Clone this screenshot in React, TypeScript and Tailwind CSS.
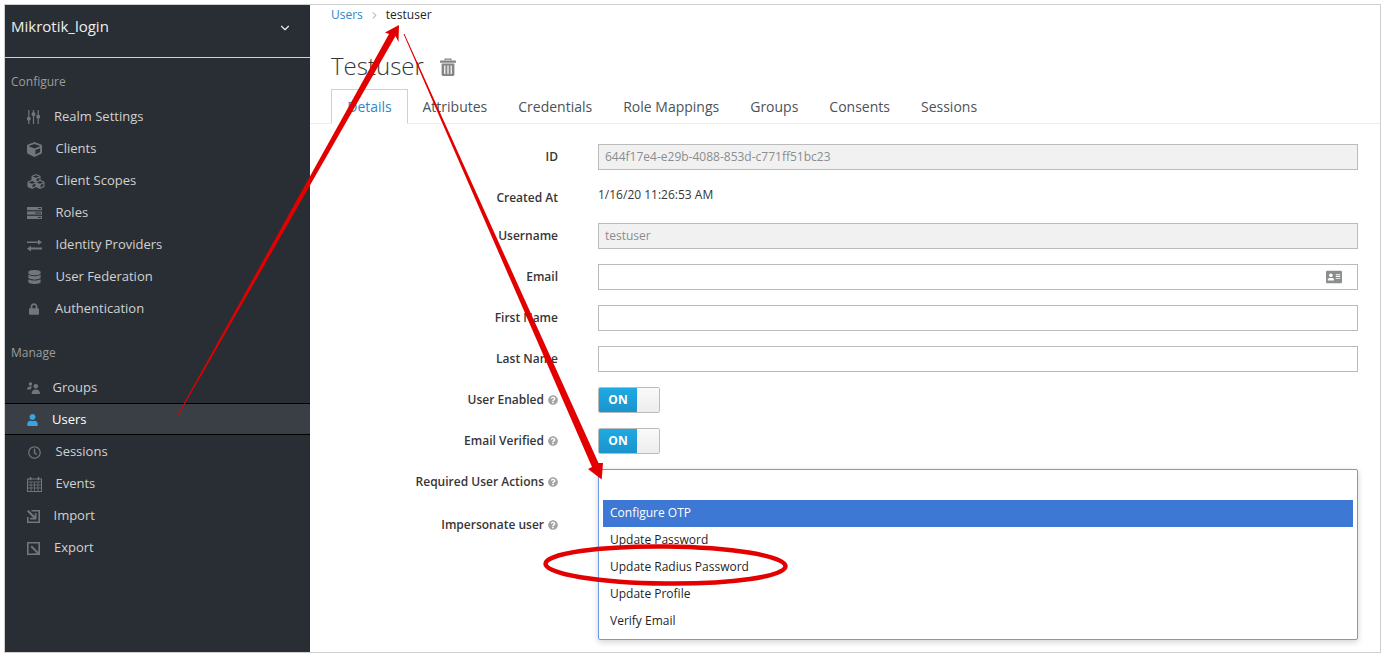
import type { ReactNode } from "react";
import { FaAddressCard, FaCube, FaCubes, FaDatabase, FaLock, FaQuestionCircle, FaRegClock, FaUser } from "react-icons/fa";
import { LuChevronDown, LuChevronRight } from "react-icons/lu";

const SlidersIcon = () => (
  <svg viewBox="0 0 13 14" className="h-[14px] w-[13px]" fill="currentColor">
    <rect x="1.2" y="0" width="1.2" height="14" />
    <rect x="5.9" y="0" width="1.2" height="14" />
    <rect x="10.6" y="0" width="1.2" height="14" />
    <rect x="0" y="7" width="3.6" height="3.4" rx="0.8" />
    <rect x="4.7" y="2.6" width="3.6" height="3.4" rx="0.8" />
    <rect x="9.4" y="5" width="3.6" height="3.4" rx="0.8" />
  </svg>
);

const RolesIcon = () => (
  <svg viewBox="0 0 15 12" className="h-3 w-[15px]" fill="currentColor">
    <rect x="0" y="0" width="15" height="3.2" />
    <rect x="0" y="4.4" width="15" height="3.2" />
    <rect x="0" y="8.8" width="15" height="3.2" />
    <rect x="11" y="1" width="3" height="1" fill="#292e34" />
    <rect x="8" y="5.5" width="6" height="1" fill="#292e34" />
    <rect x="11" y="9.9" width="3" height="1" fill="#292e34" />
  </svg>
);

const ProvidersIcon = () => (
  <svg viewBox="0 0 15 13" className="h-[13px] w-[15px]" fill="currentColor">
    <path d="M0 2.4H11V0.4L15 3.2L11 6V4H0Z" />
    <path d="M15 8.6H4V6.8L0 9.8L4 12.6V10.4H15Z" />
  </svg>
);

const GroupsIcon = () => (
  <svg viewBox="0 0 13 12" className="h-[12px] w-[13px]" fill="currentColor">
    <circle cx="3.4" cy="2" r="1.8" />
    <path d="M0 7.4C0 5.2 1.4 4.4 3.4 4.4C4.2 4.4 4.8 4.5 5.3 4.8C4.4 5.6 3.9 6.4 3.8 7.4Z" />
    <circle cx="8.8" cy="4.2" r="2.3" />
    <path d="M4.6 12C4.6 8.8 6.2 7.4 8.8 7.4C11.4 7.4 13 8.8 13 12Z" />
  </svg>
);

const CalendarIcon = () => (
  <svg viewBox="0 0 15 15" className="h-[15px] w-[15px]" fill="none" stroke="currentColor">
    <rect x="0.5" y="2" width="14" height="12.5" strokeWidth="1" />
    <path d="M0.5 5H14.5M0.5 8H14.5M0.5 11H14.5M4 5V14.5M7.5 5V14.5M11 5V14.5" strokeWidth="0.8" />
    <path d="M3.5 0V3.2M11.5 0V3.2" strokeWidth="1.6" />
  </svg>
);

const ImportIcon = () => (
  <svg viewBox="0 0 13 13" className="h-[13px] w-[13px]" fill="none" stroke="currentColor" strokeWidth="1.6">
    <path d="M4.5 0.8H12.2V12.2H0.8V7" />
    <path d="M0.8 0.8L7.8 7.8" strokeWidth="2" />
    <path d="M3.2 8.6H8.6V3.2" strokeWidth="1.8" />
  </svg>
);

const ExportIcon = () => (
  <svg viewBox="0 0 13 13" className="h-[13px] w-[13px]" fill="none" stroke="currentColor" strokeWidth="1.6">
    <path d="M12.2 7V0.8H0.8V12.2H7" />
    <path d="M4.2 4.2L11.6 11.6" strokeWidth="2" />
    <path d="M6.4 12.2H12.2V6.4" strokeWidth="1.8" />
  </svg>
);

const TrashIcon = () => (
  <svg viewBox="0 0 16 18" className="ml-[16px] mt-[2px] h-[18px] w-[16px] text-[#858585]" fill="currentColor">
    <path d="M4.5 2.6V0.6H11.5V2.6H10.2V1.8H5.8V2.6Z" />
    <rect x="0" y="2.6" width="16" height="2.2" rx="0.4" />
    <path
      fillRule="evenodd"
      d="M1.6 5.6H14.4V16.6C14.4 17.4 13.8 18 13 18H3C2.2 18 1.6 17.4 1.6 16.6ZM4.2 7.4V16H5.4V7.4ZM7.4 7.4V16H8.6V7.4ZM10.6 7.4V16H11.8V7.4Z"
    />
  </svg>
);

type NavItem = { label: string; icon: ReactNode; textClass: string; active?: boolean };

const configureItems: NavItem[] = [
  { label: "Realm Settings", icon: <SlidersIcon />, textClass: "ml-[27px]" },
  { label: "Clients", icon: <FaCube className="h-[15px] w-[15px]" />, textClass: "ml-[28.5px]" },
  { label: "Client Scopes", icon: <FaCubes className="h-[17px] w-[18px]" />, textClass: "ml-[28.5px]" },
  { label: "Roles", icon: <RolesIcon />, textClass: "ml-[28.5px]" },
  { label: "Identity Providers", icon: <ProvidersIcon />, textClass: "ml-[28.5px]" },
  { label: "User Federation", icon: <FaDatabase className="ml-px h-[14px] w-[13px]" />, textClass: "ml-[28.5px]" },
  { label: "Authentication", icon: <FaLock className="ml-[2px] h-[12px] w-[10px]" />, textClass: "ml-[28px]" },
];

const manageItems: NavItem[] = [
  { label: "Groups", icon: <GroupsIcon />, textClass: "ml-[25.5px]" },
  { label: "Users", icon: <FaUser className="h-[12px] w-[11px] text-[#39a5dc]" />, textClass: "ml-[25px]", active: true },
  { label: "Sessions", icon: <FaRegClock className="ml-px h-[13px] w-[13px]" />, textClass: "ml-[28.5px]" },
  { label: "Events", icon: <CalendarIcon />, textClass: "ml-[28.5px]" },
  { label: "Import", icon: <ImportIcon />, textClass: "ml-[26.5px]" },
  { label: "Export", icon: <ExportIcon />, textClass: "ml-[27px]" },
];

function NavRow({ item }: { item: NavItem }) {
  return (
    <div
      className={
        item.active
          ? "-mt-px mb-px flex h-8 items-center border-y border-black bg-[#393f44] pl-[22px] pt-[2px] text-[13px] text-white"
          : "flex h-8 items-center pl-[22px] text-[13px] text-[#d1d1d1]"
      }
    >
      <span className="flex h-4 w-0 items-center text-[#72767b] *:shrink-0">{item.icon}</span>
      <span className={item.textClass}>{item.label}</span>
    </div>
  );
}

function Sidebar() {
  return (
    <aside className="flex w-[305px] shrink-0 flex-col bg-[#292e34]">
      <div className="flex h-[53px] items-start justify-between border-b border-[#d1d1d1] pl-[6px] pr-[18px] pt-[10px] text-[15px] text-[#eeeeee]">
        <span>Mikrotik_login</span>
        <LuChevronDown className="mt-[6px] h-[14px] w-[14px]" />
      </div>
      <div className="pl-[6px] pt-[15px] text-[12px] leading-[18px] text-[#9c9c9c]">Configure</div>
      <div className="mt-[10px]">
        {configureItems.map((item) => (
          <NavRow key={item.label} item={item} />
        ))}
      </div>
      <div className="pl-[6px] pt-[19px] text-[12px] leading-[18px] text-[#9c9c9c]">Manage</div>
      <div className="mt-[10px]">
        {manageItems.map((item) => (
          <NavRow key={item.label} item={item} />
        ))}
      </div>
    </aside>
  );
}

function HelpLabel({ children }: { children: ReactNode }) {
  return (
    <span className="flex items-center justify-end gap-[4px]">
      {children}
      <FaQuestionCircle className="h-[10px] w-[10px] text-[#a3a3a3]" />
    </span>
  );
}

function FormRow({ label, children, rowClass }: { label: ReactNode; children?: ReactNode; rowClass: string }) {
  return (
    <div className={`flex items-center ${rowClass}`}>
      <div className="w-[248px] shrink-0 text-right text-[12px] font-semibold text-[#363636]">{label}</div>
      <div className="relative ml-[40px] flex-1">{children}</div>
    </div>
  );
}

function TextField({ value, disabled, icon }: { value?: string; disabled?: boolean; icon?: ReactNode }) {
  return (
    <div
      className={
        disabled
          ? "flex h-[26px] items-center justify-between border border-[#bbbbbb] bg-[#f1f1f1] px-[6px] text-[12px] text-[#8b8d8f]"
          : "flex h-[26px] items-center justify-between border border-[#bbbbbb] bg-white px-[6px] text-[12px] text-[#363636]"
      }
    >
      <span>{value}</span>
      {icon}
    </div>
  );
}

function OnSwitch() {
  return (
    <div className="flex h-[26px] w-[62px] overflow-hidden rounded-[2px] border border-[#bbbbbb]">
      <div className="flex w-[38px] items-center justify-center bg-gradient-to-b from-[#1fa9e3] to-[#1a94cd] text-[12px] font-bold text-white">ON</div>
      <div className="flex-1 bg-gradient-to-b from-[#fafafa] to-[#ededed]" />
    </div>
  );
}

function ActionsDropdown() {
  const options = ["Configure OTP", "Update Password", "Update Radius Password", "Update Profile", "Verify Email"];
  return (
    <div className="absolute left-0 right-0 top-[-13px] z-10 h-[171px] rounded-[2px] border border-[#6c9be8] bg-white px-1 pt-[30px] text-[12px] text-[#1f1f1f] shadow-[0_2px_6px_rgba(0,0,0,0.18)]">
      {options.map((option, i) => (
        <div key={option} className={i === 0 ? "flex h-[27px] items-center bg-[#3d78d4] pb-[2px] pl-[7px] text-white" : "flex h-[27px] items-center pb-[2px] pl-[7px]"}>
          {option}
        </div>
      ))}
    </div>
  );
}

function UserDetails() {
  const tabs = ["Attributes", "Credentials", "Role Mappings", "Groups", "Consents", "Sessions"];
  return (
    <main className="relative flex-1 bg-white">
      <div className="flex h-[20px] items-center pl-[21px] text-[12px]">
        <span className="text-[#2f86c9]">Users</span>
        <LuChevronRight className="mx-[6px] h-[11px] w-[11px] text-[#8b8d8f]" />
        <span className="text-[#1f1f1f]">testuser</span>
      </div>
      <div className="mt-[23px] flex items-center pl-[21px]">
        <h1 className="text-[24px] font-light leading-[36px] text-[#363636]">Testuser</h1>
        <TrashIcon />
      </div>
      <div className="mt-[5px] flex h-[35px] border-b border-[#ededed] pl-[21px] text-[14px]">
        <div className="mr-[-1px] flex h-[35px] w-[77px] items-center justify-center border border-b-white border-[#d1d1d1] text-[#2f86c9]">Details</div>
        {tabs.map((tab) => (
          <div key={tab} className="flex h-[34px] items-center px-[15.5px] text-[#4d5258]">
            {tab}
          </div>
        ))}
      </div>
      <div className="pr-[22px] pt-[20px]">
        <FormRow label="ID" rowClass="h-[26px]">
          <TextField value="644f17e4-e29b-4088-853d-c771ff51bc23" disabled />
        </FormRow>
        <FormRow label="Created At" rowClass="mt-[15px] h-[26px]">
          <span className="block -translate-y-[3px] text-[12px] text-[#363636]">1/16/20 11:26:53 AM</span>
        </FormRow>
        <FormRow label="Username" rowClass="mt-[12px] h-[26px]">
          <TextField value="testuser" disabled />
        </FormRow>
        <FormRow label="Email" rowClass="mt-[15px] h-[26px]">
          <TextField icon={<FaAddressCard className="mr-[9px] h-[16px] w-[16px] text-[#8b8d8f]" />} />
        </FormRow>
        <FormRow label="First Name" rowClass="mt-[15px] h-[26px]">
          <TextField />
        </FormRow>
        <FormRow label="Last Name" rowClass="mt-[15px] h-[26px]">
          <TextField />
        </FormRow>
        <FormRow label={<HelpLabel>User Enabled</HelpLabel>} rowClass="mt-[15px] h-[26px]">
          <OnSwitch />
        </FormRow>
        <FormRow label={<HelpLabel>Email Verified</HelpLabel>} rowClass="mt-[15px] h-[26px]">
          <OnSwitch />
        </FormRow>
        <FormRow label={<HelpLabel>Required User Actions</HelpLabel>} rowClass="mt-[15px] h-[26px]">
          <ActionsDropdown />
        </FormRow>
        <FormRow label={<HelpLabel>Impersonate user</HelpLabel>} rowClass="mt-[17px] h-[26px]" />
      </div>
    </main>
  );
}

// the red markup drawn on top of the screenshot
function Annotations() {
  return (
    <svg className="pointer-events-none absolute left-0 top-0 z-20 h-[657px] w-[1385px]" viewBox="0 0 1385 657" fill="#e30000">
      <polygon points="177.5,415 389,34 385,32.5 399,25 398.5,42 395.5,36 178.5,415" />
      <polygon points="404.5,34 598.5,463 603,463 601.7,479.5 588,469 592,467 403.5,34" />
      <ellipse cx="665.5" cy="565" rx="120" ry="18.5" fill="none" stroke="#e30000" strokeWidth="4.5" transform="rotate(0.6 665 565)" />
    </svg>
  );
}

export default function App() {
  return (
    <div className="relative h-[657px] w-[1385px] overflow-hidden bg-white pb-[4px] pl-[4px] pr-[4px] pt-[4px] font-['Open_Sans',sans-serif]">
      <div className="flex h-[649px] w-[1377px] border border-[#cfcfcf]">
        <Sidebar />
        <UserDetails />
      </div>
      <Annotations />
    </div>
  );
}
